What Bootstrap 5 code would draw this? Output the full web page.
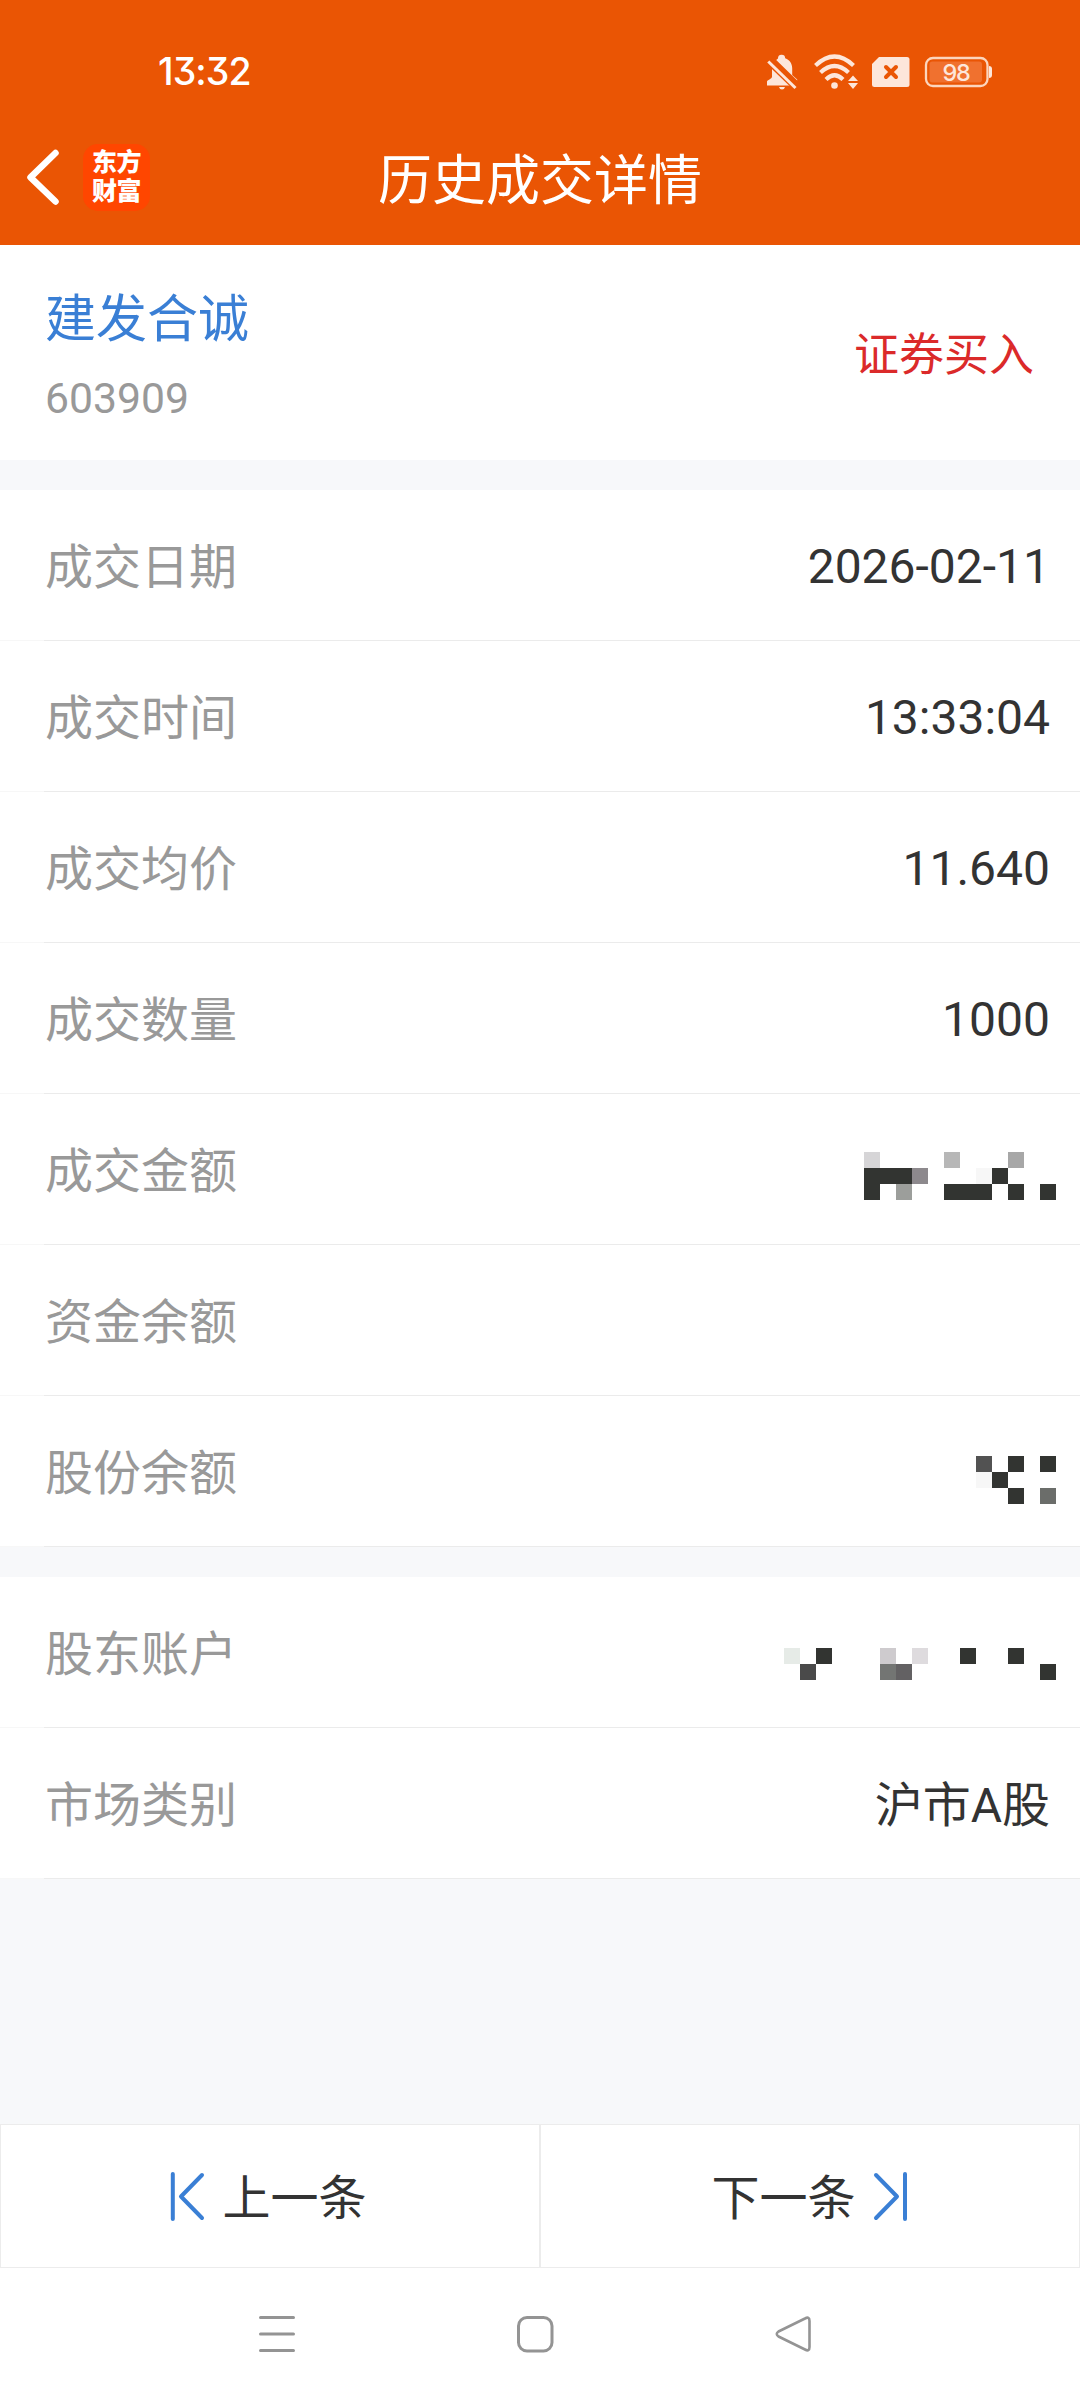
<!DOCTYPE html>
<html lang="zh-CN">
<head>
<meta charset="utf-8">
<meta name="viewport" content="width=device-width, initial-scale=1">
<title>历史成交详情</title>
<link href="https://cdn.jsdelivr.net/npm/bootstrap@5.3.0/dist/css/bootstrap.min.css" rel="stylesheet">
<style>
body { font-family: Roboto, "Noto Sans CJK SC", sans-serif; font-weight: 400; background: #f7f8fa; color: #333; height: 2400px; }
.top-area { background: #ea5504; color: #fff; height: 245px; }
.status-line { height: 144px; padding: 0 88px 0 158px; }
.clock { font: 500 37.500px/1 Inter, sans-serif; font-feature-settings: "cv09"; letter-spacing: -.9px; }
.title-line { height: 67px; padding: 0 26px; }
.app-logo { width: 67px; height: 67px; padding-bottom: 5px; border-radius: 15px; background: #ff4600; font: 900 25px/29px "Noto Sans CJK SC", sans-serif; letter-spacing: -.6px; }
.side-slot { width: 300px; }
.page-title { font-size: 54px; line-height: 1; padding-top: 8px; font-weight: 400; }
.stock-head { height: 215px; padding: 6px 46px 0 45px; }
.stock-name { font-size: 51px; line-height: 60px; color: #3a7fd5; }
.stock-code { font-size: 42.700px; line-height: 48px; color: #999; }
.trade-side { font-size: 45px; color: #db2a2a; }
.detail-list .list-group-item { height: 151px; padding: 0 30px 0 45px; border: 0 solid #ececec; border-width: 0 0 1px; border-image: linear-gradient(to right, #f7f7f7 45px, #ebebeb 45px) 1; background: #fff; color: #333; font-size: 48px; line-height: 1; }
.detail-list .list-group-item:last-child { border-bottom-width: 1px; }
.detail-list .item-label { color: #999; padding-top: 6px; }
.detail-list .item-value { padding-top: 3px; }
.gap-band { height: 30px; }
.mosaic { margin-right: -6px; }
.pager { height: 144px; }
.pager .btn { border: 1px solid #ececec; border-radius: 0; background: #fff; color: #333; font-size: 48px; line-height: 1; gap: 17px; }
.pager span { padding-top: 5px; }
.pager svg { margin-top: 1px; }
.sys-nav { height: 132px; padding: 0 268px 0 258px; }
</style>
</head>
<body class="d-flex flex-column">
<header class="top-area">
  <div class="status-line d-flex align-items-center justify-content-between">
    <span class="clock">13:32</span>
    <svg width="226" height="36" viewBox="766 54 226 36" fill="#fde6da">
      <path d="M778 58.500a3.600 3.600 0 0 1 7.200-.300c4.800 1.800 7 5.600 7 10.300v6.500l5 4.400v1l-21-20.500zM772 65.500l20.500 20H767v-3.800c0-1.800 5-2.500 5-5.200zM779 87h6q-.700 2.500-3 2.500t-3-2.500z"/>
      <path d="M768.500 61.500 796 88" stroke="#ea5504" stroke-width="6"/>
      <path d="M768.300 61.500 795.500 88" stroke="#fde6da" stroke-width="3"/>
      <g fill="none" stroke="#fde6da" stroke-width="4.200">
        <path d="M815.500 65.500Q834.500 47.500 853.500 65.500M820.500 72.500Q834.500 59.500 848.500 72.500M826 79.500Q834.500 71 843 79.500"/>
      </g>
      <circle cx="834.500" cy="85.500" r="3.300"/>
      <path d="M853 75.500l5 5.500h-10zM848 83h10l-5 6z"/>
      <path fill-rule="evenodd" d="M879 57h28q2.500 0 2.500 2.500v25q0 2.500-2.500 2.500h-32.500q-2.500 0-2.500-2.500V64z"/>
      <path d="M886 67l10 10M896 67l-10 10" stroke="#ea5504" stroke-width="4" stroke-linecap="round"/>
      <rect x="926" y="58" width="61.500" height="28" rx="7" fill="none" stroke="#fcd5bd" stroke-width="2.300"/>
      <rect x="929.500" y="61.500" width="52.500" height="21" rx="3" fill="#f0712f"/>
      <path d="M989 66q3 0 3 3v6q0 3-3 3z"/>
      <text x="956" y="80.500" text-anchor="middle" font-family="Inter, sans-serif" font-size="23.500" font-weight="500" letter-spacing="-1.200">98</text>
    </svg>
  </div>
  <div class="title-line d-flex align-items-center justify-content-between">
    <div class="side-slot d-flex align-items-center">
      <svg width="57" height="60" viewBox="26 148 57 60" fill="none" stroke="#fff" stroke-width="6.500" stroke-linecap="round" stroke-linejoin="round"><path d="M55.500 153 30.500 177.300 55.500 201.500"/></svg>
      <div class="app-logo d-flex flex-column align-items-center justify-content-center"><span>东方</span><span>财富</span></div>
    </div>
    <h1 class="page-title mb-0">历史成交详情</h1>
    <div class="side-slot"></div>
  </div>
</header>

<section class="stock-head bg-white d-flex align-items-center justify-content-between">
  <div class="d-flex flex-column gap-4">
    <span class="stock-name">建发合诚</span>
    <span class="stock-code">603909</span>
  </div>
  <span class="trade-side">证券买入</span>
</section>
<div class="gap-band"></div>

<ul class="list-group list-group-flush rounded-0 detail-list">
  <li class="list-group-item d-flex align-items-center justify-content-between"><span class="item-label">成交日期</span><span class="item-value">2026-02-11</span></li>
  <li class="list-group-item d-flex align-items-center justify-content-between"><span class="item-label">成交时间</span><span class="item-value">13:33:04</span></li>
  <li class="list-group-item d-flex align-items-center justify-content-between"><span class="item-label">成交均价</span><span class="item-value">11.640</span></li>
  <li class="list-group-item d-flex align-items-center justify-content-between"><span class="item-label">成交数量</span><span class="item-value">1000</span></li>
  <li class="list-group-item d-flex align-items-center justify-content-between"><span class="item-label">成交金额</span>
    <svg class="mosaic" style="margin-top:14px" width="192" height="48" viewBox="0 0 12 3" shape-rendering="crispEdges" fill="#323431"><path d="M0 1h3v1h-2v1h-1zM8 1h1v1h-1zM5 2h3v1h-3zM9 2h1v1h-1zM11 2h1v1h-1z"/><path fill="#d6d5d7" d="M0 0h1v1h-1z"/><path fill="#b7b7b7" d="M5 0h1v1h-1z"/><path fill="#a7a7a7" d="M9 0h1v1h-1z"/><path fill="#8d898d" d="M3 1h1v1h-1z"/><path fill="#f7f7f7" d="M7 1h1v1h-1z"/><path fill="#9c9e9b" d="M2 2h1v1h-1z"/></svg></li>
  <li class="list-group-item d-flex align-items-center justify-content-between"><span class="item-label">资金余额</span></li>
  <li class="list-group-item d-flex align-items-center justify-content-between"><span class="item-label">股份余额</span>
    <svg class="mosaic" style="margin-top:18px" width="80" height="48" viewBox="0 0 5 3" shape-rendering="crispEdges" fill="#323431"><path d="M2 0h1v1h-1zM4 0h1v1h-1zM1 1h1v1h-1zM2 2h1v1h-1z"/><path fill="#525252" d="M0 0h1v1h-1z"/><path fill="#f7f7f7" d="M0 1h1v1h-1z"/><path fill="#6b6d6a" d="M4 2h1v1h-1z"/></svg></li>
</ul>
<div class="gap-band"></div>
<ul class="list-group list-group-flush rounded-0 detail-list">
  <li class="list-group-item d-flex align-items-center justify-content-between"><span class="item-label">股东账户</span>
    <svg class="mosaic" style="margin-top:24px" width="272" height="32" viewBox="0 0 17 2" shape-rendering="crispEdges" fill="#323431"><path d="M2 0h1v1h-1zM11 0h1v1h-1zM14 0h1v1h-1zM16 1h1v1h-1z"/><path fill="#e6ebe7" d="M0 0h1v1h-1z"/><path fill="#4a4a4a" d="M1 1h1v1h-1z"/><path fill="#cecbce" d="M6 0h1v1h-1z"/><path fill="#dedbde" d="M8 0h1v1h-1z"/><path fill="#737573" d="M6 1h1v1h-1z"/><path fill="#636163" d="M7 1h1v1h-1z"/></svg></li>
  <li class="list-group-item d-flex align-items-center justify-content-between"><span class="item-label">市场类别</span><span class="item-label text-reset">沪市A股</span></li>
</ul>

<div class="pager d-flex mt-auto">
  <button class="btn w-50 d-flex align-items-center justify-content-center pe-3" type="button">
    <svg width="36" height="50" viewBox="170 2171 36 50" fill="none" stroke="#3a7fd5" stroke-width="4" stroke-linecap="round" stroke-linejoin="round"><path d="M173.800 2174v45M203 2175l-21 21.500 21 21.500" transform="translate(0 -1)"/></svg>
    <span>上一条</span>
  </button>
  <button class="btn w-50 d-flex align-items-center justify-content-center" type="button">
    <span>下一条</span>
    <svg width="36" height="50" viewBox="873 2171 36 50" fill="none" stroke="#3a7fd5" stroke-width="4" stroke-linecap="round" stroke-linejoin="round"><path d="M905 2174v45M876 2175l21 21.500-21 21.500" transform="translate(0 -1)"/></svg>
  </button>
</div>
<nav class="sys-nav bg-white d-flex align-items-center justify-content-between">
  <svg width="38" height="38" fill="none" stroke="#949494" stroke-width="3" stroke-linecap="round"><path d="M2.500 2.500h33M2.500 19h33M2.500 35.500h33"/></svg>
  <svg width="38" height="38" fill="none" stroke="#949494" stroke-width="3"><rect x="2.500" y="2.500" width="33.500" height="33.500" rx="8.500"/></svg>
  <svg width="38" height="38" fill="none" stroke="#949494" stroke-width="2.600" stroke-linejoin="round"><path d="M31 3.500Q35.500 1 35.500 6V32Q35.500 37 31 34.500L4.500 21.500Q1 19 4.500 16.500z"/></svg>
</nav>
<script src="https://cdn.jsdelivr.net/npm/bootstrap@5.3.0/dist/js/bootstrap.bundle.min.js"></script>
</body>
</html>
